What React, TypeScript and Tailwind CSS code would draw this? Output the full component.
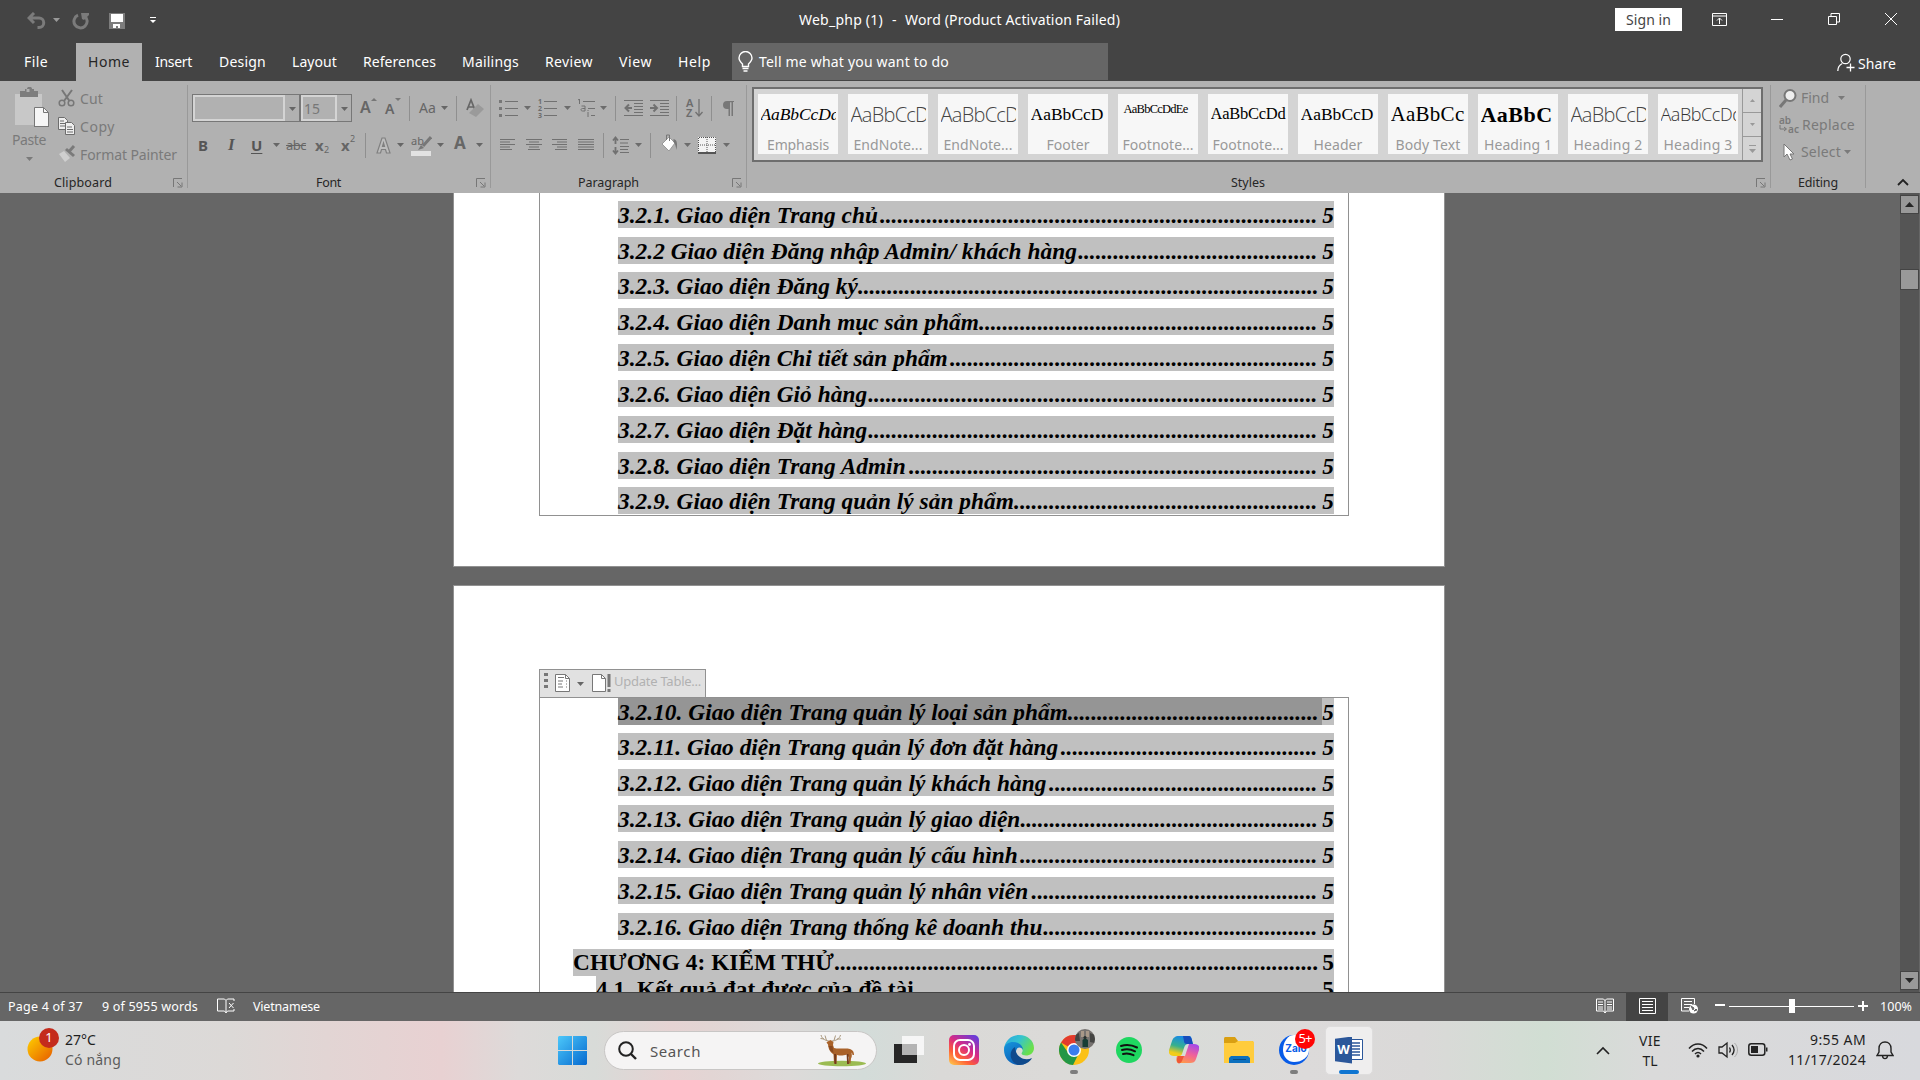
import React, { useLayoutEffect, useRef } from "react";

/** Single-line label whose letter spacing is tuned so that it spans `w` pixels. */
function Fit({ w, className = "", children }: { w: number; className?: string; children: string }) {
  const ref = useRef<HTMLSpanElement>(null);
  useLayoutEffect(() => {
    const el = ref.current;
    if (!el) return;
    el.style.letterSpacing = "0px";
    const natural = el.getBoundingClientRect().width;
    el.style.letterSpacing = `${(w - natural) / children.length}px`;
  }, [w, children]);
  return (
    <span ref={ref} className={`inline-block w-max shrink-0 whitespace-pre ${className}`}>
      {children}
    </span>
  );
}

function Svg({ w, h, className = "", children }: { w: number; h: number; className?: string; children: React.ReactNode }) {
  return (
    <svg width={w} height={h} viewBox={`0 0 ${w} ${h}`} className={`block shrink-0 ${className}`} fill="none">
      {children}
    </svg>
  );
}

function Arrow({ className = "" }: { className?: string }) {
  return (
    <Svg w={7} h={4} className={className}>
      <path d="M0 0h7L3.5 4z" fill="currentColor" />
    </Svg>
  );
}

function Sep({ className = "" }: { className?: string }) {
  return <div className={`h-[25px] w-px shrink-0 bg-[#8f8f8f] ${className}`} />;
}

function GroupLabel({ children, w, className = "", launcher = "" }: { children: string; w: number; className?: string; launcher?: string }) {
  return (
    <div className="flex h-[18px] items-center text-[12.5px] leading-[18px] text-[#262626]">
      <Fit w={w} className={className}>{children}</Fit>
      {launcher && (
        <Svg w={10} h={10} className={launcher}>
          <path d="M.5 9V.5H9M4 4l4 4M9 4.500V9H4.500" stroke="#777" />
        </Svg>
      )}
    </div>
  );
}

function TitleBar() {
  return (
    <div className="flex h-[43px] shrink-0 items-center bg-[#444] text-white">
      <Svg w={19} h={17} className="ml-[27px] mt-[-2px]">
        <path d="M7 1L2 6l5 5M2.500 6H12a4.500 4.500 0 010 9.500h-1.500" stroke="#7b7b7b" strokeWidth="3" />
      </Svg>
      <Arrow className="ml-[7px] mt-[-3px] text-[#9a9a9a]" />
      <Svg w={18} h={17} className="ml-[12px] mt-[-1px]">
        <path d="M6 2.200A6.600 6.600 0 1012.500 3" stroke="#7b7b7b" strokeWidth="3" />
        <path d="M9 0h8v2l-5 5-2-1z" fill="#7b7b7b" />
      </Svg>
      <Svg w={16} h={16} className="ml-[19px] mt-[-1px]">
        <path d="M0 0h16v16H0z" fill="#7d7d7d" />
        <path d="M2 1h12v8H2zM4 11h7v4H9v-2H7v2H4z" fill="#fff" />
      </Svg>
      <Svg w={6} h={7} className="ml-[25px] mt-[-3px]">
        <path d="M0 .5h6" stroke="#fff" />
        <path d="M0 3h6L3 6z" fill="#fff" />
      </Svg>
      <div className="ml-[643px] mt-[-4px] flex text-[14px] leading-5">
        <Fit w={84}>Web_php (1)</Fit>
        <Fit w={6} className="ml-[9px]">-</Fit>
        <Fit w={215} className="ml-[7px]">Word (Product Activation Failed)</Fit>
      </div>
      <div className="ml-auto mt-[-4px] flex h-[23px] w-[67px] items-center justify-center bg-white text-[14px] text-[#444]">
        <Fit w={45}>Sign in</Fit>
      </div>
      <Svg w={15} h={13} className="ml-[30px] mt-[-5px]">
        <path d="M.5.5h14v12H.5zM.5 3h14M7.500 11V5M5 7.500L7.500 5 10 7.500" stroke="#fff" />
      </Svg>
      <div className="ml-[44px] mt-[-4px] h-px w-3 bg-white" />
      <Svg w={12} h={12} className="ml-[45px] mt-[-5px]">
        <path d="M.5 3.500h8v8h-8zM3 3V.5h8.500V9H9" stroke="#fff" />
      </Svg>
      <Svg w={12} h={12} className="ml-[45px] mr-[23px] mt-[-5px]">
        <path d="M0 0l12 12M12 0L0 12" stroke="#fff" />
      </Svg>
    </div>
  );
}

function TabBar() {
  return (
    <div className="flex h-[38px] shrink-0 items-center bg-[#444] text-[14px] leading-5 text-white">
      <Fit w={24} className="ml-[24px]">File</Fit>
      <div className="ml-[28px] flex h-full w-[66px] items-center bg-[#b1b1b1] pl-3 text-[#262626]">
        <Fit w={42}>Home</Fit>
      </div>
      <Fit w={37} className="ml-[13px]">Insert</Fit>
      <Fit w={47} className="ml-[27px]">Design</Fit>
      <Fit w={45} className="ml-[26px]">Layout</Fit>
      <Fit w={73} className="ml-[26px]">References</Fit>
      <Fit w={57} className="ml-[26px]">Mailings</Fit>
      <Fit w={48} className="ml-[26px]">Review</Fit>
      <Fit w={33} className="ml-[26px]">View</Fit>
      <Fit w={33} className="ml-[26px]">Help</Fit>
      <div className="ml-[21px] flex h-[37px] w-[376px] items-center self-start bg-[#666] pl-1.5">
        <Svg w={15} h={21} className="mt-[-1px]">
          <path d="M4.500 15.500v-2.500C2.500 11 1 9.500 1 7a6.500 6.500 0 0113 0c0 2.500-1.500 4-3.500 6v2.500zM4.500 17.500h6M5.500 20h4" stroke="#fff" strokeWidth="1.400" />
        </Svg>
        <Fit w={190} className="ml-[6px]">Tell me what you want to do</Fit>
      </div>
      <Svg w={18} h={19} className="ml-auto">
        <circle cx="8.500" cy="6" r="4.700" stroke="#fff" strokeWidth="1.200" />
        <path d="M.8 18c0-3.500 1.500-6 4.500-7.500M9.500 14.500h8M13.500 10.500v8" stroke="#fff" strokeWidth="1.300" />
      </Svg>
      <Fit w={38} className="ml-[3px] mr-6 mt-[3px]">Share</Fit>
    </div>
  );
}

function Clipboard() {
  return (
    <div className="flex w-[187px] shrink-0 flex-col text-[14px] text-[#7a7a7a]">
      <div className="flex h-[93px] pt-[6px]">
        <div className="ml-[12px] flex w-[38px] flex-col">
          <Svg w={36} h={40} className="ml-[2px]">
            <path d="M1 7h27v31H1z" fill="#c8c8c8" />
            <path d="M6 4h5V2h2c0-3 5-3 5 0h2v2h4v6H6z" fill="#7d7d7d" />
            <path d="M12.500 2h3v3h-3z" fill="#b1b1b1" />
            <path d="M20.500 20.500h9l5 5v15h-14z" fill="#f6f6f6" stroke="#777" />
            <path d="M29.500 20.500v5h5M20.500 39.500h14" stroke="#777" />
          </Svg>
          <Fit w={34} className="mt-[3px] leading-[19px]">Paste</Fit>
          <Arrow className="ml-[14px] mt-[8px]" />
        </div>
        <div className="ml-[8px] mt-[-1px] flex flex-col">
          <div className="flex h-[24px] items-center">
            <Svg w={18} h={18}>
              <path d="M4 1l7.500 11M14 1L6 12" stroke="#777" strokeWidth="2" />
              <circle cx="4" cy="14" r="2.800" stroke="#777" strokeWidth="1.500" />
              <circle cx="13" cy="14" r="2.800" stroke="#777" strokeWidth="1.500" />
            </Svg>
            <Fit w={23} className="ml-[4px]">Cut</Fit>
          </div>
          <div className="mt-[4px] flex h-[24px] items-center">
            <Svg w={18} h={18}>
              <path d="M.5.5h6l3 3v9h-9z" fill="#eee" stroke="#6d6d6d" />
              <path d="M2 4h4M2 6.500h5M2 9h5" stroke="#6d6d6d" />
              <path d="M7.500 5.500h6l3 3v9h-9z" fill="#eee" stroke="#6d6d6d" />
              <path d="M9 10h5M9 12.500h6M9 15h6" stroke="#6d6d6d" />
            </Svg>
            <Fit w={35} className="ml-[4px]">Copy</Fit>
          </div>
          <div className="mt-[4px] flex h-[24px] items-center">
            <Svg w={18} h={18}>
              <path d="M1 9l5-3 6 7-5 4z" fill="#cfcfcf" />
              <path d="M7 5l2-2 8 7-2 2z" fill="#7a7a7a" />
              <path d="M11.500 6L16 1" stroke="#7a7a7a" strokeWidth="3" />
            </Svg>
            <Fit w={97} className="ml-[4px]">Format Painter</Fit>
          </div>
        </div>
      </div>
      <GroupLabel w={58} className="ml-[54px]" launcher="ml-[61px]">Clipboard</GroupLabel>
    </div>
  );
}

function FontGroup() {
  return (
    <div className="flex w-[302px] shrink-0 flex-col text-[#666]">
      <div className="mt-[13px] flex h-[28px] items-center">
        <div className="ml-[4px] flex h-[28px] w-[108px] border border-[#777] bg-[#b1b1b1]">
          <div className="h-full w-[92px] border-2 border-[#d4d4d4]" />
          <Arrow className="ml-[4px] mt-[12px]" />
        </div>
        <div className="flex h-[28px] w-[52px] border border-[#777] bg-[#b1b1b1]">
          <div className="flex h-full w-[36px] items-center border-2 border-[#d4d4d4] pl-px text-[14px] text-[#777]">
            <Fit w={16}>15</Fit>
          </div>
          <Arrow className="ml-[4px] mt-[12px]" />
        </div>
        <span className="mb-[2px] ml-[8px] w-[11px] text-[16px] font-semibold">A</span>
        <Svg w={6} h={3} className="mb-[17px]"><path d="M0 3h6L3 0z" fill="#777" /></Svg>
        <span className="ml-[8px] w-[10px] text-[14px] font-semibold">A</span>
        <Svg w={6} h={3} className="mb-[17px]"><path d="M0 0h6L3 3z" fill="#777" /></Svg>
        <Sep className="ml-[8px]" />
        <Fit w={17} className="mb-[2px] ml-[9px] text-[14px]">Aa</Fit>
        <Arrow className="ml-[5px]" />
        <Sep className="ml-[8px]" />
        <Svg w={19} h={20} className="ml-[9px]">
          <path d="M1 12L5 2l4 10M2.500 9h5" stroke="#666" strokeWidth="1.700" />
          <path d="M3 15l9-9 6 5-8 8z" fill="#9a9a9a" />
        </Svg>
      </div>
      <div className="mt-[9px] flex h-[28px] items-center">
        <span className="ml-[10px] w-[11px] text-[15px] font-bold text-[#555]">B</span>
        <span className="ml-[19px] w-[10px] font-['Liberation_Serif'] text-[17px] font-bold italic text-[#555]">I</span>
        <span className="ml-[13px] w-[12px] text-[15px] font-bold text-[#555] underline underline-offset-2">U</span>
        <Arrow className="ml-[10px]" />
        <Fit w={20} className="ml-[6px] pt-px text-[13px] line-through">abc</Fit>
        <span className="ml-[9px] w-[9px] text-[15px] font-bold">x</span>
        <span className="mt-[9px] w-[6px] text-[9px]">2</span>
        <span className="ml-[11px] w-[9px] text-[15px] font-bold">x</span>
        <span className="mb-[12px] w-[6px] text-[9px]">2</span>
        <Sep className="ml-[9px]" />
        <Svg w={15} h={17} className="ml-[10px]">
          <path d="M1 16L6 1h3l5 15h-3.500l-1-3.500h-4L4.500 16zM6.500 9.500h2L7.500 6z" stroke="#808080" strokeWidth="1.200" fill="#bdbdbd" />
        </Svg>
        <Arrow className="ml-[6px]" />
        <div className="ml-[7px] flex w-[21px] flex-col">
          <div className="flex h-[16px] items-start">
            <span className="w-[13px] text-[11px] leading-[11px]">ab</span>
            <Svg w={14} h={15} className="ml-[-6px] mt-px">
              <path d="M13 1L5 10" stroke="#777" strokeWidth="3" />
              <path d="M0 14l3-5 3 3z" fill="#777" />
            </Svg>
          </div>
          <div className="h-[5px] w-[20px] bg-[#e2e2e2]" />
        </div>
        <Arrow className="ml-[5px]" />
        <span className="mb-[4px] ml-[10px] w-[13px] text-[17px] font-bold">A</span>
        <Arrow className="ml-[9px]" />
      </div>
      <div className="mt-[15px] flex">
        <GroupLabel w={25} className="ml-[128px]" launcher="ml-[135px]">Font</GroupLabel>
      </div>
    </div>
  );
}

const DASH = "#717171";

function AlignIcon({ lines, className = "" }: { lines: [number, number][]; className?: string }) {
  return (
    <Svg w={16} h={14} className={className}>
      {lines.map(([x, w], i) => (
        <rect key={i} x={x} y={1 + i * 2.5} width={w} height={1} fill={DASH} />
      ))}
    </Svg>
  );
}

function Paragraph() {
  return (
    <div className="flex w-[255px] shrink-0 flex-col text-[#6c6c6c]">
      <div className="mt-[13px] flex h-[28px] items-center">
        <Svg w={19} h={18} className="ml-[8px]">
          <path d="M0 1h3v3H0zM0 8h3v3H0zM0 15h3v3H0z" fill="#777" />
          <path d="M6 2.500h13M6 9.500h13M6 16.500h13" stroke={DASH} />
        </Svg>
        <Arrow className="ml-[6px]" />
        <div className="ml-[7px] flex w-[20px] items-center">
          <div className="flex w-[6px] flex-col text-[7px] font-bold leading-[7px]"><span>1</span><span>2</span><span>3</span></div>
          <Svg w={13} h={18}><path d="M0 2.500h13M0 9.500h13M0 16.500h13" stroke={DASH} /></Svg>
        </div>
        <Arrow className="ml-[6px]" />
        <Svg w={19} h={19} className="ml-[6px]">
          <path d="M1 1l1.500-1v5M6 2.500h12M11 9.500h7M14 16.500h4M11 13v5M11 11v1" stroke={DASH} />
          <path d="M4.500 7h3.500v5H5.500c-2 0-2-2.500 0-2.500H8" stroke={DASH} />
        </Svg>
        <Arrow className="ml-[4px]" />
        <Sep className="ml-[8px]" />
        <Svg w={19} h={17} className="ml-[8px]">
          <path d="M0 .5h19M10 3.500h9M10 6.500h9M10 9.500h9M10 12.500h9M0 15.500h19" stroke={DASH} />
          <path d="M8 8H2M5 4.500L1.500 8 5 11.500" stroke={DASH} strokeWidth="2" />
        </Svg>
        <Svg w={19} h={17} className="ml-[7px]">
          <path d="M0 .5h19M10 3.500h9M10 6.500h9M10 9.500h9M10 12.500h9M0 15.500h19" stroke={DASH} />
          <path d="M0 8h6M3.500 4.500L7 8l-3.500 3.500" stroke={DASH} strokeWidth="2" />
        </Svg>
        <Sep className="ml-[7px]" />
        <div className="ml-[9px] flex w-[18px] items-center">
          <div className="flex w-[9px] flex-col text-[11px] font-semibold leading-[10px]"><span>A</span><span>Z</span></div>
          <Svg w={8} h={18}><path d="M4 0v17M.5 13L4 17l3.500-4" stroke={DASH} strokeWidth="1.300" /></Svg>
        </div>
        <Sep className="ml-[7px]" />
        <Svg w={12} h={15} className="ml-[10px]">
          <path d="M6 0h6v1h-1v14H9.500V1.200H8V15H6.500V8H5a4 4 0 010-8z" fill="#777" />
        </Svg>
      </div>
      <div className="mt-[9px] flex h-[28px] items-center">
        <AlignIcon className="ml-[9px]" lines={[[0, 15], [0, 10], [0, 15], [0, 10], [0, 12]]} />
        <AlignIcon className="ml-[10px]" lines={[[0, 16], [3, 10], [0, 16], [3, 10], [2, 12]]} />
        <AlignIcon className="ml-[10px]" lines={[[0, 15], [5, 10], [0, 15], [5, 10], [3, 12]]} />
        <AlignIcon className="ml-[10px]" lines={[[0, 16], [0, 16], [0, 16], [0, 16], [0, 16]]} />
        <Sep className="ml-[9px]" />
        <Svg w={18} h={19} className="ml-[8px]">
          <path d="M3.500 2v6M3.500 11v6M1 4.500L3.500 1.500 6 4.500M1 14.500l2.500 3 2.500-3" stroke={DASH} strokeWidth="1.800" />
          <path d="M8 3.500h9M8 7h8M8 10.500h9M8 13.500h8M8 16.500h9" stroke={DASH} />
        </Svg>
        <Arrow className="ml-[5px]" />
        <Sep className="ml-[8px]" />
        <Svg w={18} h={19} className="mb-[3px] ml-[10px]">
          <path d="M1 10l7-7 6 6-6 8z" fill="#fff" stroke="#999" />
          <path d="M5.500 6V1h3v6" stroke="#777" />
          <path d="M12.500 5c4 1 4 5 3 11-1-4-1-6-3-8z" fill="#777" />
        </Svg>
        <Arrow className="ml-[5px]" />
        <Svg w={18} h={17} className="ml-[7px]">
          <path d="M0 0h18v17H0z" fill="#f3f3f3" />
          <path d="M.5 16V.5h17V16M9 0v16M0 8h18" stroke="#555" strokeDasharray="1 1" />
          <path d="M0 16h18" stroke="#555" strokeWidth="2" />
        </Svg>
        <Arrow className="ml-[7px]" />
      </div>
      <div className="mt-[15px] flex">
        <GroupLabel w={61} className="ml-[87px]" launcher="ml-[93px]">Paragraph</GroupLabel>
      </div>
    </div>
  );
}

const SERIF = "font-['Liberation_Serif'] text-black";
const LIGHT = "font-['Open_Sans'] font-light text-[20px] leading-[41px] text-[#444]";
const STYLES: { sample: string; w: number; cls: string; name: string; nw: number }[] = [
  { sample: "AaBbCcDd", w: 79, cls: `${SERIF} text-[17.5px] italic`, name: "Emphasis", nw: 62 },
  { sample: "AaBbCcD", w: 78, cls: LIGHT, name: "EndNote...", nw: 69 },
  { sample: "AaBbCcD", w: 78, cls: LIGHT, name: "EndNote...", nw: 69 },
  { sample: "AaBbCcD", w: 73, cls: `${SERIF} text-[17.5px]`, name: "Footer", nw: 43 },
  { sample: "AaBbCcDdEe", w: 67, cls: `${SERIF} text-[12.500px] pl-[3px] pb-[11px]`, name: "Footnote...", nw: 71 },
  { sample: "AaBbCcDd", w: 75, cls: `${SERIF} text-[16.500px]`, name: "Footnote...", nw: 71 },
  { sample: "AaBbCcD", w: 73, cls: `${SERIF} text-[17.5px]`, name: "Header", nw: 49 },
  { sample: "AaBbCc", w: 74, cls: `${SERIF} text-[21px]`, name: "Body Text", nw: 65 },
  { sample: "AaBbC", w: 72, cls: `${SERIF} text-[22px] font-bold`, name: "Heading 1", nw: 68 },
  { sample: "AaBbCcD", w: 78, cls: LIGHT, name: "Heading 2", nw: 69 },
  { sample: "AaBbCcDd", w: 82, cls: "font-['Open_Sans'] font-light text-[18px] leading-[41px] text-[#333]", name: "Heading 3", nw: 69 },
];

function StylesGroup() {
  return (
    <div className="flex w-[1023px] shrink-0 flex-col">
      <div className="ml-[5px] mt-[6px] flex h-[75px] w-[1011px] border-2 border-[#6e6e6e] bg-[#d4d4d4]">
        <div className="ml-1 mt-[5px] flex gap-[10px]">
          {STYLES.map((s, i) => (
            <div key={i} className="flex h-[60px] w-[80px] flex-col bg-[#f7f7f7] px-[2.500px]">
              <div className="flex h-[41px] items-center overflow-hidden">
                <Fit w={s.w} className={s.cls}>{s.sample}</Fit>
              </div>
              <div className="flex h-[19px] items-start justify-center text-[14px] leading-[19px] text-[#999]">
                <Fit w={s.nw}>{s.name}</Fit>
              </div>
            </div>
          ))}
        </div>
        <div className="ml-auto flex w-[19px] flex-col divide-y divide-[#999] border-l border-[#999]">
          <div className="flex h-[24px] items-center justify-center"><Svg w={5} h={3}><path d="M0 3h5L2.500 0z" fill="#999" /></Svg></div>
          <div className="flex h-[24px] items-center justify-center"><Svg w={5} h={3}><path d="M0 0h5L2.500 3z" fill="#999" /></Svg></div>
          <div className="flex h-[23px] items-center justify-center">
            <Svg w={7} h={8}><path d="M0 .5h7" stroke="#999" /><path d="M0 4h7L3.500 8z" fill="#999" /></Svg>
          </div>
        </div>
      </div>
      <div className="mt-[12px] flex">
        <GroupLabel w={34} className="ml-[484px]" launcher="ml-[491px]">Styles</GroupLabel>
      </div>
    </div>
  );
}

function Editing() {
  return (
    <div className="flex w-[94px] shrink-0 flex-col text-[14px] leading-5 text-[#7a7a7a]">
      <div className="ml-[8px] mt-[5px] flex h-[24px] items-center">
        <Svg w={18} h={19}>
          <circle cx="11" cy="6.500" r="5.500" fill="#eee" stroke="#777" strokeWidth="2" />
          <path d="M7 11l-6 7" stroke="#777" strokeWidth="3" />
        </Svg>
        <Fit w={28} className="ml-[4px]">Find</Fit>
        <Arrow className="ml-[9px]" />
      </div>
      <div className="ml-[8px] mt-[3px] flex h-[24px] items-center">
        <div className="flex w-[22px] flex-col text-[10px] font-semibold leading-[9px]">
          <span>ab</span>
          <span className="flex"><Svg w={9} h={9}><path d="M1 0v4h6M5 2l2.500 2L5 6" stroke="#777" /></Svg><Fit w={11}>ac</Fit></span>
        </div>
        <Fit w={53} className="ml-px">Replace</Fit>
      </div>
      <div className="ml-[12px] mt-[3px] flex h-[24px] items-center">
        <Svg w={12} h={18}>
          <path d="M1 1v13l3-3 3 6 2.500-1-2.500-5h4z" fill="#fff" stroke="#777" />
        </Svg>
        <Fit w={40} className="ml-[6px]">Select</Fit>
        <Arrow className="ml-[3px]" />
      </div>
      <div className="mt-[10px] flex">
        <GroupLabel w={40} className="ml-[27px]">Editing</GroupLabel>
      </div>
    </div>
  );
}

function GroupSep() {
  return <div className="mt-[4px] h-[103px] w-px shrink-0 bg-[#999]" />;
}

function Ribbon() {
  return (
    <div className="flex h-[112px] shrink-0 bg-[#b1b1b1]">
      <Clipboard />
      <GroupSep />
      <FontGroup />
      <GroupSep />
      <Paragraph />
      <GroupSep />
      <StylesGroup />
      <GroupSep />
      <Editing />
      <GroupSep />
      <Svg w={12} h={8} className="ml-auto mr-[11px] mt-[97px]">
        <path d="M1 7l5-5 5 5" stroke="#222" strokeWidth="1.800" />
      </Svg>
    </div>
  );
}

type Entry = { text: string; dots: number; gap: string };
const PAGE_ONE: Entry[] = [
  { text: "3.2.1. Giao diện Trang chủ", dots: 75, gap: "mt-[8px]" },
  { text: "3.2.2 Giao diện Đăng nhập Admin/ khách hàng", dots: 41, gap: "mt-[9px]" },
  { text: "3.2.3. Giao diện Đăng ký", dots: 79, gap: "mt-[8px]" },
  { text: "3.2.4. Giao diện Danh mục sản phẩm", dots: 58, gap: "mt-[9px]" },
  { text: "3.2.5. Giao diện Chi tiết sản phẩm", dots: 63, gap: "mt-[9px]" },
  { text: "3.2.6. Giao diện Giỏ hàng", dots: 77, gap: "mt-[9px]" },
  { text: "3.2.7. Giao diện Đặt hàng", dots: 77, gap: "mt-[9px]" },
  { text: "3.2.8. Giao diện Trang Admin", dots: 70, gap: "mt-[9px]" },
  { text: "3.2.9. Giao diện Trang quản lý sản phẩm", dots: 52, gap: "mt-[8px]" },
];
const PAGE_TWO: Entry[] = [
  { text: "3.2.11. Giao diện Trang quản lý đơn đặt hàng", dots: 44, gap: "mt-[8px]" },
  { text: "3.2.12. Giao diện Trang quản lý khách hàng", dots: 46, gap: "mt-[9px]" },
  { text: "3.2.13. Giao diện Trang quản lý giao diện", dots: 51, gap: "mt-[9px]" },
  { text: "3.2.14. Giao diện Trang quản lý cấu hình", dots: 51, gap: "mt-[9px]" },
  { text: "3.2.15. Giao diện Trang quản lý nhân viên", dots: 49, gap: "mt-[9px]" },
  { text: "3.2.16. Giao diện Trang thống kê doanh thu", dots: 47, gap: "mt-[9px]" },
];

function TocLine({ text, dots, gap, className = "ml-[78px] italic leading-[29px]", selected = false }: Entry & { className?: string; selected?: boolean }) {
  return (
    <div className={`mr-[14px] flex h-[27px] shrink-0 whitespace-pre bg-[#c0c0c0] ${gap} ${className}`}>
      <span className={`flex min-w-0 flex-1 justify-between ${selected ? "bg-[#959595]" : ""}`}>
        <span className="tracking-[0.035px]">{text}</span>
        <span className="mr-[5px]">{".".repeat(dots)}</span>
      </span>
      <span>5</span>
    </div>
  );
}

function ScrollButton({ up = false }: { up?: boolean }) {
  return (
    <div className="flex h-[19px] w-[19px] items-center justify-center border border-[#444] bg-[#999]">
      <Svg w={9} h={5}><path d={up ? "M0 5h9L4.500 0z" : "M0 0h9L4.500 5z"} fill="#262626" /></Svg>
    </div>
  );
}

function DocumentView() {
  return (
    <div className="flex h-[799px] shrink-0 overflow-hidden bg-[#666]">
      <div className="ml-[453px] flex w-[992px] flex-col font-['Liberation_Serif'] text-[23.33px] font-bold text-black">
        <div className="h-[374px] shrink-0 border border-t-0 border-[#919191] bg-white">
          <div className="ml-[85px] flex h-[323px] w-[810px] flex-col border border-t-0 border-[#919191]">
            {PAGE_ONE.map((e) => <TocLine key={e.text} {...e} />)}
          </div>
        </div>
        <div className="mt-[18px] flex h-[500px] shrink-0 flex-col border border-[#919191] bg-white">
          <div className="ml-[85px] mt-[83px] flex h-[28px] w-[167px] shrink-0 border border-b-0 border-[#919191] bg-[#e1e1e1] font-['Noto_Sans'] text-[13px] font-normal text-[#b1b1b1]">
            <Svg w={5} h={15} className="ml-[4px] mt-[3px]">
              <path d="M0 0h4v3H0zM0 6h4v3H0zM0 12h4v3H0z" fill="#777" />
            </Svg>
            <Svg w={16} h={18} className="ml-[6px] mt-[4px]">
              <path d="M.5.5h10l4 4v13H.5z" fill="#fff" stroke="#777" />
              <path d="M10.500.5v4h4M3 3.500h6M3 7h5M3 10h4M3 13h5M11 7h1M11 10h1M11 13h1" stroke="#777" />
            </Svg>
            <Arrow className="ml-[6px] mt-[12px] text-[#666]" />
            <Svg w={20} h={19} className="ml-[8px] mt-[4px]">
              <path d="M.5.5h9l4 4v13H.5z" fill="#fff" stroke="#777" />
              <path d="M9.500.5v4h4" stroke="#777" />
              <path d="M15.500 0h3v13h-3zM15.500 15h3v3h-3z" fill="#777" />
            </Svg>
            <Fit w={87} className="ml-[2px] mt-px leading-5">Update Table...</Fit>
          </div>
          <div className="ml-[85px] flex h-[400px] w-[810px] shrink-0 flex-col border border-[#919191]">
            <TocLine text="3.2.10. Giao diện Trang quản lý loại sản phẩm" dots={43} gap="mt-0" selected />
            {PAGE_TWO.map((e) => <TocLine key={e.text} {...e} />)}
            <TocLine text="CHƯƠNG 4: KIỂM THỬ" dots={83} gap="mt-[9px]" className="ml-[33px] leading-[27px]" />
            <TocLine text="4.1. Kết quả đạt được của đề tài" dots={68} gap="mt-0" className="ml-[56px] leading-[27px]" />
          </div>
        </div>
      </div>
      <div className="ml-auto mr-px flex w-[19px] flex-col bg-[#555] pt-[2px]">
        <ScrollButton up />
        <div className="mt-[55px] h-[21px] border border-[#444] bg-[#999]" />
        <div className="mb-[2px] mt-auto"><ScrollButton /></div>
      </div>
    </div>
  );
}

function StatusBar() {
  return (
    <div className="flex h-[29px] shrink-0 items-center border-t border-[#444] bg-[#666] text-[12.500px] leading-5 text-white">
      <Fit w={75} className="ml-[8px]">Page 4 of 37</Fit>
      <Fit w={96} className="ml-[19px]">9 of 5955 words</Fit>
      <Svg w={18} h={16} className="ml-[19px] mt-[-3px]">
        <path d="M9 14V2.500L7.500 1H.5v12h7L9 15l1.500-2H17V11M9 2.500L10.500 1H17v2M12 5l4.500 5M16.500 5L12 10" stroke="#fff" />
      </Svg>
      <Fit w={67} className="ml-[18px]">Vietnamese</Fit>
      <Svg w={18} h={16} className="ml-auto mt-[-3px]">
        <path d="M.5 1h7L9 2.500 10.500 1h7v12h-7L9 15l-1.500-2h-7zM9 2v13M2 4h5M2 6.500h5M2 9h5M2 11h5M11 4h5M11 6.500h5M11 9h5M11 11h5" stroke="#fff" />
      </Svg>
      <div className="ml-[12px] flex h-full w-[42px] items-center justify-center bg-[#444]">
        <Svg w={17} h={16} className="mt-[-2px]">
          <path d="M.5.5h16v15H.5zM3 3.500h11M3 6.500h11M3 9.500h11M3 12.500h11" stroke="#fff" />
        </Svg>
      </div>
      <Svg w={18} h={16} className="ml-[13px] mt-[-2px]">
        <path d="M13.500 6V.5H.5v12.500H8M3 3.500h8M3 6.500h8M3 9.500h5" stroke="#fff" />
        <circle cx="12.500" cy="11" r="4.500" fill="#fff" />
        <path d="M10 8l3 2-1 2zM13 13l2-2 1 1z" fill="#666" stroke="#666" />
      </Svg>
      <div className="ml-[16px] mt-[-4px] h-[2px] w-[10px] bg-white" />
      <div className="ml-[4px] mt-[-2px] flex h-[14px] w-[125px] items-center">
        <div className="h-px w-[60px] bg-white" />
        <div className="h-[14px] w-[6px] bg-white" />
        <div className="h-px w-[59px] bg-white" />
      </div>
      <Svg w={10} h={10} className="ml-[4px] mt-[-2px]"><path d="M5 0v10M0 5h10" stroke="#fff" strokeWidth="2" /></Svg>
      <Fit w={32} className="ml-[12px] mr-[8px]">100%</Fit>
    </div>
  );
}

function Deer() {
  return (
    <Svg w={50} h={33}>
      <ellipse cx="25" cy="29.500" rx="24" ry="2.800" fill="#9bbb52" />
      <path d="M12.500 7C9 7 5 5 4 1M7 5L3.500 4.500M9.500 6.500L8 1.500M14.500 7c4 0 8-2 9-6M20 5l4 0M17 6.500l1.500-5" stroke="#a8967c" strokeWidth="1" />
      <path d="M10 8l3.500-2 3 2-.5 3 1 3c5 1.500 11-.5 16 1 3 1 4 3 4 6h-1.500c0-1-.5-2-1-2.500.5 3 .5 4-.5 6l-.5 5h-2l.5-6-2-3c-4 1-6 1.500-10 .500l-.5 8.500h-2.500l-.5-9c-4-3-5-6-5.500-10l-1.500-2z" fill="#a9622a" />
      <path d="M18 20l.5 10M30.500 20l.5 10" stroke="#71391b" strokeWidth="1.800" />
      <path d="M11.500 12h4l1 7-3-2z" fill="#8a4a20" />
    </Svg>
  );
}

function Taskbar() {
  return (
    <div className="flex h-[59px] shrink-0 items-start bg-[linear-gradient(90deg,#d9dbdc_0%,#dcd9d7_12%,#e2d5d4_17%,#e8d1d2_23%,#dddad9_27%,#d8dbd8_31%,#e6d3d3_35%,#e2d5d4_37%,#dddad9_41%,#d3dcd9_45%,#dad9d7_49%,#dbdad8_55%,#d8dcd8_60%,#dcdada_68%,#dad9d8_74%,#d1ded3_80.500%,#dadada_86%,#d8d9dd_100%)] text-[15px] text-[#1f1f1f]">
      <div className="relative ml-[26px] mt-[13px] h-[32px] w-[34px] shrink-0">
        <Svg w={34} h={32}>
          <defs><linearGradient id="sun" x1="0" y1="0" x2="1" y2="1"><stop stopColor="#ffd000" /><stop offset="1" stopColor="#e65a00" /></linearGradient></defs>
          <circle cx="14" cy="15" r="12.500" fill="url(#sun)" />
        </Svg>
        <div className="absolute left-[13px] top-[-6px] flex size-5 items-center justify-center rounded-full bg-[#c42b1c] text-[13px] text-white">1</div>
      </div>
      <div className="ml-[5px] mt-[9px] flex flex-col text-[14px] leading-[20px]">
        <Fit w={31}>27°C</Fit>
        <Fit w={56} className="text-[#5c5c5c]">Có nắng</Fit>
      </div>
      <Svg w={29} h={29} className="ml-[437px] mt-[15px]">
        <defs><linearGradient id="win" x1="0" y1="0" x2="1" y2="1"><stop stopColor="#4cc8fa" /><stop offset="1" stopColor="#0669cf" /></linearGradient></defs>
        <path d="M1 0h13v14H0V1zM15 0h13l1 1v13H15zM0 15h14v14H1l-1-1zM15 15h14v13l-1 1H15z" fill="url(#win)" />
      </Svg>
      <div className="ml-[17px] mt-[10px] flex h-[39px] w-[273px] shrink-0 items-center rounded-full border border-[#c8c6c5] bg-[#f5f4f4]">
        <Svg w={19} h={19} className="ml-[13px]">
          <circle cx="8" cy="8" r="6.800" stroke="#222" strokeWidth="2" />
          <path d="M13 13l5 5" stroke="#222" strokeWidth="2.400" />
        </Svg>
        <Fit w={51} className="ml-[13px] mt-[2px] text-[15px] text-[#555]">Search</Fit>
        <div className="ml-[116px]"><Deer /></div>
      </div>
      <Svg w={30} h={29} className="ml-[17px] mt-[14px]">
        <path d="M0 9h23v19H0z" fill="#272727" />
        <path d="M8 1h22v19H8z" fill="#f6f6f6" />
        <path d="M8 9h15v11H8z" fill="#b4b4b4" />
      </Svg>
      <Svg w={30} h={30} className="ml-[25px] mt-[14px]">
        <defs>
          <linearGradient id="ig" x1="0.1" y1="1" x2="0.8" y2="0"><stop stopColor="#ffc24a" /><stop offset=".3" stopColor="#ff6038" /><stop offset=".6" stopColor="#d62a86" /><stop offset="1" stopColor="#6a3cd8" /></linearGradient>
        </defs>
        <rect width="30" height="30" rx="5" fill="url(#ig)" />
        <rect x="5" y="5" width="20" height="20" rx="6" stroke="#fff" strokeWidth="2" />
        <circle cx="15" cy="15" r="5" stroke="#fff" strokeWidth="2" />
        <circle cx="20.500" cy="9.500" r="1.400" fill="#fff" />
      </Svg>
      <Svg w={30} h={30} className="ml-[25px] mt-[14px]">
        <defs>
          <linearGradient id="e1" x1="0" y1="0" x2="1" y2=".5"><stop stopColor="#2aa5e0" /><stop offset=".5" stopColor="#34c3d0" /><stop offset="1" stopColor="#6be04b" /></linearGradient>
          <linearGradient id="e2" x1="0" y1="0" x2=".6" y2="1"><stop stopColor="#1695dc" /><stop offset="1" stopColor="#0b5cb5" /></linearGradient>
        </defs>
        <path d="M0 14C1 5 8 0 15 0c9 0 15 6 15 13 0 5-4 7.500-8 7.500-3 0-5.500-1-4-3 2-3-1-7-5-7C7 10 2 13 0 14z" fill="url(#e1)" />
        <path d="M0 15c0-6 5-8 9-8 6 0 10 4 10 8-1-3-7-4-7 2 0 6 5 10 12 9-2 3-6 4-9 4C6 30 0 23 0 15z" fill="url(#e2)" />
        <path d="M11 12c-8 5-4 17 4 18 6 0 11-3 13-7-4 2-9 1.500-12-1-3-2-5-6-5-10z" fill="#104a8c" />
      </Svg>
      <div className="relative ml-[25px] mt-[14px] flex h-[40px] w-[30px] shrink-0 flex-col items-center">
        <Svg w={30} h={30}>
          <circle cx="15" cy="15" r="15" fill="#fbc116" />
          <path d="M15 15L2 7.500A15 15 0 0128 7.500z" fill="#e33b2e" />
          <path d="M15 15l6 1-7 14A15 15 0 012 7.500l7 10z" fill="#239746" />
          <circle cx="15" cy="15" r="7" fill="#fff" />
          <circle cx="15" cy="15" r="5.500" fill="#3b7ded" />
        </Svg>
        <div className="mt-[5px] h-[4px] w-2 rounded-full bg-[#7d7d7d]" />
        <div className="absolute left-[16px] top-[-6px] size-5 overflow-hidden rounded-full">
          <Svg w={20} h={20}>
            <path d="M0 0h20v20H0z" fill="#777370" />
            <path d="M0 6l4-2 1 8H0zM15 4l5 2v8l-5-1z" fill="#454543" />
            <path d="M6 2h3v6H6zM11 2h3v6h-3z" fill="#a89888" />
            <path d="M7.500 11l2.500-2 3 2v7H7.500z" fill="#173d35" />
            <circle cx="10" cy="8.500" r="1.600" fill="#29302e" />
          </Svg>
        </div>
      </div>
      <Svg w={26} h={26} className="ml-[27px] mt-[16px]">
        <circle cx="13" cy="13" r="13" fill="#1ed760" />
        <path d="M5 9c6-1.800 11-1 16 1.500M6 13c5-1.500 9-.8 13 1.300M7 17c4-1 7-.5 10.500 1.200" stroke="#111" strokeWidth="2" strokeLinecap="round" />
      </Svg>
      <Svg w={30} h={28} className="ml-[27px] mt-[15px]">
        <defs>
          <linearGradient id="c1" x1=".5" y1="0" x2=".2" y2="1"><stop stopColor="#1789e8" /><stop offset=".5" stopColor="#36b08d" /><stop offset=".85" stopColor="#f2cc1a" /></linearGradient>
          <linearGradient id="c2" x1=".7" y1="0" x2=".3" y2="1"><stop stopColor="#a64ae8" /><stop offset=".5" stopColor="#f0619a" /><stop offset="1" stopColor="#ff9a4a" /></linearGradient>
        </defs>
        <path d="M9 27c-2-1-2-5-1-7h8l4-12h5c5 0 6 3 5 6l-3 9c-1 3-3 4-6 4z" fill="url(#c2)" />
        <path d="M21 0c2 1 2 5 3 8h-5c-2 0-3 1-4 4l-2 6c-1 2-2 2-4 2H5c-4 0-6-3-5-6l3-9c1-3 3-5 7-5z" fill="url(#c1)" />
        <path d="M14 0h6c3 1 3 5 4 8h-6c-2 0-3-1-3-3z" fill="#174dbc" />
        <path d="M9 20h6l-2 5c-1 2-3 3-4 2-2-2-1-5 0-7z" fill="#ef5735" />
      </Svg>
      <Svg w={30} h={27} className="ml-[25px] mt-[16px]">
        <path d="M0 2c0-2 1-2 2-2h9l3 4h15v20H0z" fill="#d99f12" />
        <path d="M0 6h11l3-2h14c2 0 2 1 2 2v20H0z" fill="#ffcc3d" />
        <path d="M5 26v-5l2-2h17l2 2v5z" fill="#0c70be" />
        <path d="M9 22.500h13" stroke="#064b86" />
      </Svg>
      <div className="relative ml-[25px] mt-[14px] flex h-[40px] w-[30px] shrink-0 flex-col items-center">
        <div className="flex h-[30px] w-[30px] items-center justify-center rounded-full border-l-[4px] border-b-[3px] border-[#075be8] bg-white font-['Inter'] text-[10px] font-bold text-[#075be8]">
          Zalo
        </div>
        <div className="mt-[5px] h-[4px] w-2 rounded-full bg-[#7d7d7d]" />
        <div className="absolute left-[16px] top-[-6px] flex size-5 items-center justify-center rounded-full bg-[#ff0505] text-[13px] text-white">
          <Fit w={13}>5+</Fit>
        </div>
      </div>
      <div className="ml-[16px] mt-[5px] flex h-[49px] w-[48px] shrink-0 flex-col items-center rounded-[5px] border border-[#dedddd] bg-[#efeeee]">
        <div className="mt-[9px] flex h-[28px] w-[28px] items-center">
          <div className="flex h-[27px] w-[17px] items-center justify-center bg-[#2b579a] text-[13px] font-bold text-white [clip-path:polygon(0_8%,100%_0,100%_100%,0_92%)]">W</div>
          <Svg w={11} h={22}>
            <path d="M0 .5h10.500v20H0" fill="#fff" stroke="#2b579a" />
            <path d="M0 4h8M0 7h8M0 10h8M0 13h8M0 16h8" stroke="#2b579a" strokeWidth="1.500" />
          </Svg>
        </div>
        <div className="mt-[6px] h-[4px] w-5 rounded-full bg-[#0f75d1]" />
      </div>
      <Svg w={14} h={9} className="ml-[223px] mt-[25px]"><path d="M1 8l6-6 6 6" stroke="#222" strokeWidth="1.600" /></Svg>
      <div className="ml-[29px] mt-[10px] flex w-[22px] flex-col items-center text-[14px] leading-[20px]">
        <Fit w={22}>VIE</Fit>
        <Fit w={15}>TL</Fit>
      </div>
      <Svg w={20} h={16} className="ml-[27px] mt-[21px]">
        <path d="M1 6.500c5-6 13-6 18 0M4 9.500c3.500-4 8.500-4 12 0M7 12c2-2 4-2 6 0" stroke="#222" strokeWidth="1.500" />
        <circle cx="10" cy="14" r="1.600" fill="#222" />
      </Svg>
      <Svg w={20} h={18} className="ml-[10px] mt-[20px]">
        <path d="M1 6h3l5-4v14l-5-4H1z" stroke="#222" strokeWidth="1.300" />
        <path d="M11.500 6.500c1 1.500 1 3.500 0 5M14 4c2.500 3 2.500 7 0 10" stroke="#222" strokeWidth="1.300" />
        <path d="M16.500 2c4 4 4 10 0 14" stroke="#aaa" />
      </Svg>
      <Svg w={20} h={13} className="ml-[10px] mt-[22px]">
        <rect x=".8" y=".8" width="16" height="11.400" rx="2.500" stroke="#222" strokeWidth="1.500" />
        <path d="M3 3h7v7H3z" fill="#222" />
        <path d="M18 4.500h1.500v4H18z" fill="#222" />
      </Svg>
      <div className="ml-[20px] mt-[9px] flex w-[78px] flex-col items-end text-[14px] leading-[20px]">
        <Fit w={56}>9:55 AM</Fit>
        <Fit w={78}>11/17/2024</Fit>
      </div>
      <Svg w={18} h={20} className="ml-[10px] mt-[20px]">
        <path d="M1 14.500L3 11V7.500C3 3.500 5.500 1 9 1s6 2.500 6 6.500V11l2 3.500zM6.500 15c.5 3.500 4.500 3.500 5 0" stroke="#222" strokeWidth="1.400" />
      </Svg>
    </div>
  );
}

export default function App() {
  return (
    <div className="flex h-[1080px] w-[1920px] flex-col overflow-hidden bg-[#666] font-['Noto_Sans',sans-serif]">
      <TitleBar />
      <TabBar />
      <Ribbon />
      <DocumentView />
      <StatusBar />
      <Taskbar />
    </div>
  );
}
